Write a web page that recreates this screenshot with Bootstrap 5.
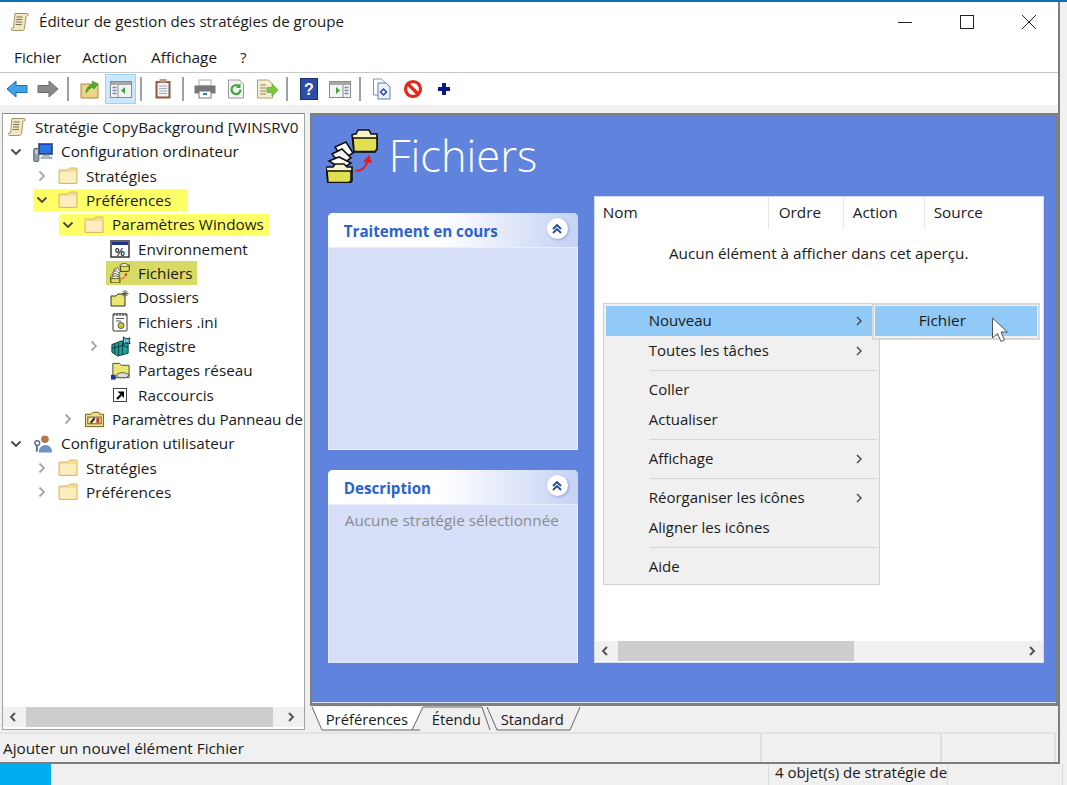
<!DOCTYPE html>
<html lang="fr">
<head>
<meta charset="utf-8">
<title>Éditeur de gestion des stratégies de groupe</title>
<link href="https://cdn.jsdelivr.net/npm/bootstrap@5.3.0/dist/css/bootstrap.min.css" rel="stylesheet">
<style>
html,body{height:785px;overflow:hidden}
body{margin:0;background:#f0f0f0;color:#1a1a1a;font-family:"Open Sans","Noto Sans",sans-serif;font-size:15.3px;line-height:1.2;border-top:2px solid #0b6fb5}
.gp-win{width:1060px;height:762px;border-right:2px solid #7d7d7d;border-bottom:2px solid #7d7d7d;background:#f0f0f0}
.gp-win>div{flex:none}
.gp-title{height:42px;background:#fff;padding-left:10px;padding-bottom:3px}
.gp-title-text{font-size:15.1px;margin-left:9px}
.gp-ctl{width:62px;height:38px}
.gp-ctl:last-child{margin-right:-2px}
.gp-menu{background:#fff;padding-left:14px;padding-bottom:2px;gap:21px;border-bottom:1px solid #c8c8c8;box-sizing:content-box;height:26px}
.gp-m1{margin-right:3px}.gp-m2{margin-right:2px}
.gp-tools{height:32px;background:#fff;padding-left:1px}
.gp-tb{width:31px;height:30px;border:1px solid transparent}
.gp-tb.gp-on{background:#cce8ff;border-color:#99d1ff}
.gp-sep{width:11px;height:24px;position:relative}
.gp-sep::after{content:"";position:absolute;left:4px;top:0;bottom:0;width:2px;background:#a0a0a0}
.gp-gap{height:8px}
.gp-main{height:619px}
.gp-left{width:303px;margin-left:2px;height:617px;border:1px solid #a3a3a3;border-top-color:#8a8a8a;background:#fff}
.gp-tree{padding-top:1px;white-space:nowrap}
.gp-row{height:24.35px;padding-left:0}
.gp-d1{padding-left:25px}.gp-d2{padding-left:51px}.gp-d3{padding-left:77px}
.gp-root{padding-left:0}
.gp-chev{width:26px;flex:none}
.gp-chev svg{margin-left:7px}
.gp-d1 .gp-chev svg,.gp-d2 .gp-chev svg,.gp-d3 .gp-chev svg{margin-left:8px}
.gp-ico{width:32px;flex:none;padding-left:4px}
.gp-hl{background:#ffff66;margin-left:5px;padding-right:17px;height:22px}
.gp-hl .gp-chev{width:22px}
.gp-d1 .gp-hl .gp-chev svg,.gp-d2 .gp-hl .gp-chev svg{margin-left:3px}
.gp-hl .gp-ico{width:31px;padding-left:3px}
.gp-hl2{padding-right:5px}
.gp-sel{background:#d9d965;padding-right:5px;height:24px}
.gp-tight{letter-spacing:-.15px}
.gp-scroll{height:20px;background:#f0f0f0;flex:none}
.gp-left .gp-scroll{margin-bottom:2px}
.gp-arrow{width:20px;height:20px}
.gp-arrow-r{margin-right:3px}
.gp-list .gp-arrow-r{margin-right:1px}
.gp-thumb{background:#cdcdcd;height:20px;margin-left:3px}
.gp-right{width:749px;margin-left:5px}
.gp-panel{height:593px;background:#6083dd;border:2px solid #7f7f7f;border-bottom:3px solid #808080;box-shadow:inset 0 -1px 0 #d8e2f8}
.gp-head{height:82px;padding-left:14px}
.gp-h1{font-size:43.4px;font-weight:300;color:#fff;margin-left:11px;line-height:1}
.gp-cols{padding-left:16px;gap:17px}
.gp-lcol{width:250px;padding-top:16px;gap:20px}
.gp-card{border:0;border-radius:5px 5px 0 0;background:#d6dff7;box-shadow:inset 0 0 0 1px #e8eefc}
.gp-c1{height:237px}.gp-c2{height:193px}
.gp-card-h{height:35px;padding:3px 10px 0 16px;border:0;border-radius:5px 5px 0 0;background:linear-gradient(90deg,#fff 0,#fff 45%,#c5d2f4 100%);border-bottom:1px solid #e8eefc;color:#2a62d0;font-weight:700;font-size:15.2px}
.gp-round{width:21px;height:21px;border-radius:50%;background:#fff;box-shadow:1px 1px 3px #8ea4d8;margin-top:-6px}
.gp-card-b{padding:6px 17px;color:#8a8a8a;font-size:15.3px}
.gp-list{width:448px;height:465px;background:#fff;box-shadow:0 0 0 1px #d0dcf5}
.gp-lh{height:32px}
.gp-lh>div{padding-left:8px;border-right:1px solid #e5e5e5;height:32px;line-height:31px}
.gp-empty{padding-top:15px;text-align:center;height:412px}
.gp-ctx.dropdown-menu{position:absolute;left:8px;top:106px;width:277px;height:282px;padding:2px;margin:0;display:block;min-width:0;border-radius:0;background:#f0f0f0;border:1px solid #cfcfcf;font-size:15px;color:#1a1a1a}
.gp-sub.dropdown-menu{left:277px;width:168px;height:37px;border-width:2px;border-color:#d8d8d8;padding:1px;font-size:15.3px}
.gp-ctx .dropdown-item{height:30px;padding:0 0 0 43px;color:#1a1a1a;line-height:28px;position:relative;background:none}
.gp-ctx .dropdown-item.active{background:#91c9f7;color:#1a1a1a}
.gp-sub .dropdown-item{height:30px;padding-left:44px}
.gp-ctx .dropdown-divider{margin:4px 0 4px 44px;border-color:#d5d5d5;opacity:1;height:0}
.gp-caret{position:absolute;right:14px;top:10px}
.gp-cursor{position:absolute;left:396px;top:120px;z-index:1001}
.gp-tabs{height:24px;font-size:14.8px;padding-top:3px}
.gp-tabsvg{position:absolute;left:0;top:0}
.gp-tab{position:relative;height:21px;line-height:21px}
.gp-status{height:30px;border-top:2px solid #e3e3e3}
.gp-status>div{border-right:2px solid #dedede;height:28px;line-height:28px;padding-left:3px}
.gp-strip{height:21px;font-size:15px}
.gp-blue{width:51px;background:#00adef}
.gp-sc{width:180px;padding-left:6px;margin-left:717px;border-left:1px solid #dcdcdc;border-right:1px solid #dcdcdc;white-space:nowrap;line-height:16px}
.gp-sc2{width:115px;border-right:1px solid #dcdcdc}
</style>
</head>
<body>
<svg width="0" height="0" class="d-block position-absolute">
<defs>
<symbol id="i-scroll" viewBox="0 0 20 20"><path d="M5 1.500h12c1.200 0 1.500 1.500.5 2.500l-1.500.5-1.500 12c-.2 1.200-1 2-2 2H2.500c-1.300 0-1.700-2-.5-2.500H3.500z" fill="#f2e6c0" stroke="#a39468"/><path d="M6.500 5h6M6.200 7.500h6M6 10h6M5.700 12.500h6" stroke="#77705a"/></symbol>
<symbol id="i-folder" viewBox="0 0 20 20"><path d="M1 4h9l1.500-2H19v15.500H1z" fill="#f8dd95" stroke="#d8b86c"/><path d="M2 6h16v10.500H2z" fill="#fdeebf"/></symbol>
<symbol id="i-computer" viewBox="0 0 20 20"><rect x="5.500" y="1.500" width="14" height="11" fill="#1d3fc0" stroke="#5c6d80"/><path d="M7 3h11v8H7z" fill="#2b74e6"/><path d="M10 13h6v2h3v1.500H8V15h2z" fill="#b7c0c8" stroke="#7c8791" stroke-width=".5"/><rect x=".8" y="6.500" width="5" height="13" rx="1" fill="#8fa3b5" stroke="#4f5f70"/><path d="M2 9h2.500M2 11h2.500" stroke="#fff"/></symbol>
<symbol id="i-env" viewBox="0 0 20 20"><rect x="1" y="2" width="18" height="16" fill="#fff" stroke="#333" stroke-width="1.500"/><rect x="2" y="3" width="16" height="3" fill="#21308f"/><text x="10" y="16.500" text-anchor="middle" font-family="Liberation Sans,sans-serif" font-size="11" font-weight="700" fill="#222">%</text></symbol>
<symbol id="i-files" viewBox="0 0 52 54"><g stroke="#111" stroke-width="1.600"><path d="M26 6l2-1h2l2-4h11l2 4h6v15l-2 3H28z" fill="#f4f4c8"/><path d="M27 9h24v11l-2 2.500H28z" fill="#e0e050"/><path d="M9 18l11-5 7 11-10 6z" fill="#fff"/><path d="M6 25l10-5 9 9-10 7z" fill="#f4f4f4"/><path d="M3 32l10-4 12 6-9 6z" fill="#fff"/><path d="M0 38h7l2-3h9l3 3h5v14l-2 2H2z" fill="#f4f4c8"/><path d="M1 42h24v10l-2 1.500H2z" fill="#e0e050"/></g><path d="M30 42c6 0 10-4 12-11" fill="none" stroke="#e61c1c" stroke-width="2"/><path d="M37 33l6-7 3 8z" fill="#e61c1c"/></symbol>
<symbol id="i-newfolder" viewBox="0 0 20 20"><path d="M1 8h5l2-2h7v12H1z" fill="#e7e76e" stroke="#333"/><path d="M15 2v7M11.500 5.500h7M12.500 3l5 5M17.500 3l-5 5" stroke="#555" stroke-width="1"/></symbol>
<symbol id="i-ini" viewBox="0 0 20 20"><rect x="3" y="2" width="14" height="17" rx="1" fill="#fff" stroke="#333"/><path d="M4 1v3M7 1v3M10 1v3M13 1v3M16 1v3" stroke="#333"/><path d="M6 6.500h8M6 9h5" stroke="#555"/><circle cx="11" cy="13.500" r="3" fill="#d3c61e" stroke="#555"/></symbol>
<symbol id="i-reg" viewBox="0 0 22 22"><path d="M2 9l10-4 7 3v10l-11 3-6-4z" fill="#18a5a0" stroke="#0c3a3a"/><path d="M2 13l11-3 6 2M5 8v11M9 7v13M13 6v14" stroke="#0c3a3a" fill="none"/><path d="M14 1l3 2 4-1-1 3 1 3-4-1-3 2V6z" fill="#6cc8e2" stroke="#123"/></symbol>
<symbol id="i-share" viewBox="0 0 22 20"><path d="M3 2h7l2 2h8v13H3z" fill="#e8e86e" stroke="#444"/><path d="M7 14c3-3 9-3 13 0l-3 3H9z" fill="#ddd" stroke="#555"/><rect x="1" y="14" width="5" height="5" fill="#1534a8"/></symbol>
<symbol id="i-short" viewBox="0 0 20 20"><rect x="3.500" y="3.500" width="13" height="13" fill="#fff" stroke="#444"/><path d="M7 14l4-4" stroke="#000" stroke-width="2.200"/><path d="M7.500 6.500H14V13z" fill="#000"/></symbol>
<symbol id="i-cpl" viewBox="0 0 22 20"><path d="M1.500 5h6l2-2h6l1 2h4v13h-19z" fill="#efe07a" stroke="#6b5b14"/><rect x="4" y="8" width="14" height="7" fill="#f4ecb0" stroke="#555"/><path d="M7 14l4-5" stroke="#222" stroke-width="2"/><path d="M13 9h3v5h-3z" fill="#c83030"/></symbol>
<symbol id="i-user" viewBox="0 0 22 20"><circle cx="12.500" cy="5" r="4" fill="#b0794e"/><path d="M6 19c0-5 3-8 7-8s7 3 7 8z" fill="#6d95c4"/><circle cx="4.500" cy="9" r="2.500" fill="none" stroke="#55708f" stroke-width="1.500"/><path d="M4 11v7" stroke="#55708f" stroke-width="2"/></symbol>
<symbol id="c-down" viewBox="0 0 12 12"><path d="M1.500 3.500L6 8l4.500-4.500" fill="none" stroke="#444" stroke-width="1.800"/></symbol>
<symbol id="c-right" viewBox="0 0 12 12"><path d="M3.500 1.500L8 6l-4.500 4.500" fill="none" stroke="#a6a6a6" stroke-width="1.800"/></symbol>
<symbol id="c-dbl" viewBox="0 0 12 12"><path d="M2 6l4-4 4 4M2 10l4-4 4 4" fill="none" stroke="#21489c" stroke-width="1.800"/></symbol>
</defs>
</svg>

<div class="gp-win d-flex flex-column">
  <div class="gp-title d-flex align-items-center">
    <svg width="20" height="20"><use href="#i-scroll"/></svg>
    <span class="gp-title-text flex-grow-1">Éditeur de gestion des stratégies de groupe</span>
    <div class="gp-ctl d-flex align-items-center justify-content-center"><svg width="16" height="16"><path d="M1 8.500h14" stroke="#222"/></svg></div>
    <div class="gp-ctl d-flex align-items-center justify-content-center"><svg width="16" height="16"><rect x="1.500" y="1.500" width="13" height="13" fill="none" stroke="#222"/></svg></div>
    <div class="gp-ctl d-flex align-items-center justify-content-center"><svg width="16" height="16"><path d="M1 1l14 14M15 1L1 15" stroke="#222"/></svg></div>
  </div>
  <div class="gp-menu d-flex align-items-center"><span>Fichier</span><span class="gp-m1">Action</span><span class="gp-m2">Affichage</span><span>?</span></div>
  <div class="gp-tools d-flex align-items-center">
    <div class="gp-tb d-flex align-items-center justify-content-center"><svg width="22" height="18" viewBox="0 0 22 18"><path d="M1 9l9-8v4.500h11v7H10V17z" fill="#3ea2e6" stroke="#1d6db3"/></svg></div>
    <div class="gp-tb d-flex align-items-center justify-content-center"><svg width="22" height="18" viewBox="0 0 22 18"><path d="M21 9l-9-8v4.500H1v7h11V17z" fill="#8a8a8a" stroke="#6b6b6b"/></svg></div>
    <div class="gp-sep"></div>
    <div class="gp-tb d-flex align-items-center justify-content-center"><svg width="20" height="20" viewBox="0 0 20 20"><path d="M1 5h17v14H1z" fill="#f0d486" stroke="#a58a3c"/><path d="M6 14c0-5 3-8 7-9l-1-3 6 3-4 5-1-2c-3 1-5 3-7 6z" fill="#4fb02e" stroke="#2b7a1a" stroke-width=".6"/></svg></div>
    <div class="gp-tb gp-on d-flex align-items-center justify-content-center"><svg width="22" height="20" viewBox="0 0 22 20"><rect x=".5" y="2.500" width="21" height="16" fill="#f4f4f4" stroke="#8a8a8a"/><rect x="1" y="3" width="20" height="3" fill="#a9a9a9"/><path d="M8 6v12" stroke="#8a8a8a"/><path d="M2.500 8.500h4M2.500 11.500h4M2.500 14.500h4" stroke="#6a8cab" stroke-width="1.500"/><path d="M15 8v7l-4-3.500z" fill="#3aa53a"/></svg></div>
    <div class="gp-sep"></div>
    <div class="gp-tb d-flex align-items-center justify-content-center"><svg width="18" height="22" viewBox="0 0 18 22"><rect x="1.500" y="3" width="15" height="17.500" fill="#8d5a3c"/><rect x="3.500" y="5" width="11" height="13.500" fill="#eef3f6"/><path d="M5 8h8M5 10.500h8M5 13h8M5 15.500h8" stroke="#9eb0bd"/><rect x="5.500" y="1" width="7" height="3.500" fill="#b79a86"/></svg></div>
    <div class="gp-sep"></div>
    <div class="gp-tb d-flex align-items-center justify-content-center"><svg width="22" height="20" viewBox="0 0 22 20"><rect x="5" y="1" width="12" height="6" fill="#fff" stroke="#aaa"/><rect x=".5" y="6.500" width="21" height="8" fill="#777"/><rect x="5" y="12" width="12" height="7" fill="#fff" stroke="#777"/><path d="M9 15h4" stroke="#2d7da8" stroke-width="2"/></svg></div>
    <div class="gp-tb d-flex align-items-center justify-content-center"><svg width="20" height="20" viewBox="0 0 20 20"><path d="M2.500 1h11l4 4v14h-15z" fill="#f5f5f5" stroke="#999"/><path d="M14.500 10.500a4.500 4.500 0 1 1-1.500-3.200" fill="none" stroke="#3da83a" stroke-width="2.200"/><path d="M14.500 4v5h-4.500z" fill="#3da83a"/></svg></div>
    <div class="gp-tb d-flex align-items-center justify-content-center"><svg width="22" height="20" viewBox="0 0 22 20"><path d="M1.500 1h11l4 4v14h-15z" fill="#f5efd0" stroke="#a99f78"/><path d="M4 6h6M4 9h6M4 12h6M4 15h6" stroke="#8b8460"/><path d="M11 8.500h5V5l6 6-6 6v-3.500h-5z" fill="#78c83c" stroke="#4b9a1f" stroke-width=".6"/></svg></div>
    <div class="gp-sep"></div>
    <div class="gp-tb d-flex align-items-center justify-content-center"><svg width="18" height="22" viewBox="0 0 18 22"><rect x=".5" y=".5" width="17" height="21" fill="#2b4ea8" stroke="#1a2f70"/><text x="9" y="16.500" text-anchor="middle" font-family="Liberation Sans,sans-serif" font-size="16" font-weight="700" fill="#fff">?</text></svg></div>
    <div class="gp-tb d-flex align-items-center justify-content-center"><svg width="22" height="20" viewBox="0 0 22 20"><rect x=".5" y="2.500" width="21" height="16" fill="#f4f4f4" stroke="#8a8a8a"/><rect x="1" y="3" width="20" height="3" fill="#a9a9a9"/><path d="M14 6v12" stroke="#8a8a8a"/><path d="M15.500 8.500h4M15.500 11.500h4M15.500 14.500h4" stroke="#6a8cab" stroke-width="1.500"/><path d="M7 8v7l4-3.500z" fill="#3aa53a"/></svg></div>
    <div class="gp-sep"></div>
    <div class="gp-tb d-flex align-items-center justify-content-center"><svg width="20" height="22" viewBox="0 0 20 22"><path d="M1.500 1h8l3 3v13h-11z" fill="#fff" stroke="#7f93ad"/><path d="M6 5h8l4 4v12H6z" fill="#eef3fa" stroke="#5e7da8"/><path d="M8.500 14l3-3 3 3-3 3z" fill="none" stroke="#2a45b5" stroke-width="1.500"/></svg></div>
    <div class="gp-tb d-flex align-items-center justify-content-center"><svg width="20" height="20" viewBox="0 0 20 20"><circle cx="10" cy="10" r="7.500" fill="#fff" stroke="#e0281c" stroke-width="3.200"/><path d="M5 5l10 10" stroke="#e0281c" stroke-width="3.200"/></svg></div>
    <div class="gp-tb d-flex align-items-center justify-content-center"><svg width="14" height="14" viewBox="0 0 14 14"><path d="M5 1h4v4h4v4H9v4H5V9H1V5h4z" fill="#0b1a86"/></svg></div>
  </div>
  <div class="gp-gap"></div>

  <div class="gp-main d-flex">
    <div class="gp-left d-flex flex-column">
      <div class="gp-tree flex-grow-1 overflow-hidden">
        <div class="gp-row gp-root d-flex align-items-center"><span class="gp-ico"><svg width="20" height="20" class="d-block"><use href="#i-scroll"/></svg></span>Stratégie CopyBackground [WINSRV0</div>
        <div class="gp-row d-flex align-items-center"><span class="gp-chev"><svg width="12" height="12" class="d-block"><use href="#c-down"/></svg></span><span class="gp-ico"><svg width="20" height="20" class="d-block"><use href="#i-computer"/></svg></span>Configuration ordinateur</div>
        <div class="gp-row gp-d1 d-flex align-items-center"><span class="gp-chev"><svg width="12" height="12" class="d-block"><use href="#c-right"/></svg></span><span class="gp-ico"><svg width="20" height="20" class="d-block"><use href="#i-folder"/></svg></span>Stratégies</div>
        <div class="gp-row gp-d1 d-flex align-items-center"><div class="gp-hl d-flex align-items-center"><span class="gp-chev"><svg width="12" height="12" class="d-block"><use href="#c-down"/></svg></span><span class="gp-ico"><svg width="20" height="20" class="d-block"><use href="#i-folder"/></svg></span>Préférences</div></div>
        <div class="gp-row gp-d2 d-flex align-items-center"><div class="gp-hl gp-hl2 d-flex align-items-center"><span class="gp-chev"><svg width="12" height="12" class="d-block"><use href="#c-down"/></svg></span><span class="gp-ico"><svg width="20" height="20" class="d-block"><use href="#i-folder"/></svg></span>Paramètres Windows</div></div>
        <div class="gp-row gp-d3 d-flex align-items-center"><span class="gp-chev"></span><span class="gp-ico"><svg width="20" height="20" class="d-block"><use href="#i-env"/></svg></span>Environnement</div>
        <div class="gp-row gp-d3 d-flex align-items-center"><span class="gp-chev"></span><div class="gp-sel d-flex align-items-center"><span class="gp-ico"><svg width="20" height="20" class="d-block"><use href="#i-files"/></svg></span>Fichiers</div></div>
        <div class="gp-row gp-d3 d-flex align-items-center"><span class="gp-chev"></span><span class="gp-ico"><svg width="20" height="20" class="d-block"><use href="#i-newfolder"/></svg></span>Dossiers</div>
        <div class="gp-row gp-d3 d-flex align-items-center"><span class="gp-chev"></span><span class="gp-ico"><svg width="20" height="20" class="d-block"><use href="#i-ini"/></svg></span>Fichiers .ini</div>
        <div class="gp-row gp-d3 d-flex align-items-center"><span class="gp-chev"><svg width="12" height="12" class="d-block"><use href="#c-right"/></svg></span><span class="gp-ico"><svg width="21" height="21" class="d-block"><use href="#i-reg"/></svg></span>Registre</div>
        <div class="gp-row gp-d3 d-flex align-items-center"><span class="gp-chev"></span><span class="gp-ico"><svg width="21" height="20" class="d-block"><use href="#i-share"/></svg></span>Partages réseau</div>
        <div class="gp-row gp-d3 d-flex align-items-center"><span class="gp-chev"></span><span class="gp-ico"><svg width="20" height="20" class="d-block"><use href="#i-short"/></svg></span>Raccourcis</div>
        <div class="gp-row gp-d2 gp-tight d-flex align-items-center"><span class="gp-chev"><svg width="12" height="12" class="d-block"><use href="#c-right"/></svg></span><span class="gp-ico"><svg width="21" height="20" class="d-block"><use href="#i-cpl"/></svg></span>Paramètres du Panneau de</div>
        <div class="gp-row d-flex align-items-center"><span class="gp-chev"><svg width="12" height="12" class="d-block"><use href="#c-down"/></svg></span><span class="gp-ico"><svg width="21" height="20" class="d-block"><use href="#i-user"/></svg></span>Configuration utilisateur</div>
        <div class="gp-row gp-d1 d-flex align-items-center"><span class="gp-chev"><svg width="12" height="12" class="d-block"><use href="#c-right"/></svg></span><span class="gp-ico"><svg width="20" height="20" class="d-block"><use href="#i-folder"/></svg></span>Stratégies</div>
        <div class="gp-row gp-d1 d-flex align-items-center"><span class="gp-chev"><svg width="12" height="12" class="d-block"><use href="#c-right"/></svg></span><span class="gp-ico"><svg width="20" height="20" class="d-block"><use href="#i-folder"/></svg></span>Préférences</div>
      </div>
      <div class="gp-scroll d-flex">
        <div class="gp-arrow d-flex align-items-center justify-content-center"><svg width="10" height="10" viewBox="0 0 10 10"><path d="M7 1L3 5l4 4" fill="none" stroke="#555" stroke-width="2"/></svg></div>
        <div class="gp-thumb" style="width:247px"></div>
        <div class="flex-grow-1"></div>
        <div class="gp-arrow gp-arrow-r d-flex align-items-center justify-content-center"><svg width="10" height="10" viewBox="0 0 10 10"><path d="M3 1l4 4-4 4" fill="none" stroke="#555" stroke-width="2"/></svg></div>
      </div>
    </div>

    <div class="gp-right d-flex flex-column">
      <div class="gp-panel d-flex flex-column">
        <div class="gp-head d-flex align-items-center"><svg width="52" height="54"><use href="#i-files"/></svg><span class="gp-h1">Fichiers</span></div>
        <div class="gp-cols d-flex">
          <div class="gp-lcol d-flex flex-column">
            <div class="card gp-card gp-c1">
              <div class="card-header gp-card-h d-flex align-items-center justify-content-between">Traitement en cours<span class="gp-round d-flex align-items-center justify-content-center"><svg width="12" height="12"><use href="#c-dbl"/></svg></span></div>
            </div>
            <div class="card gp-card gp-c2">
              <div class="card-header gp-card-h d-flex align-items-center justify-content-between">Description<span class="gp-round d-flex align-items-center justify-content-center"><svg width="12" height="12"><use href="#c-dbl"/></svg></span></div>
              <div class="card-body gp-card-b">Aucune stratégie sélectionnée</div>
            </div>
          </div>
          <div class="gp-list position-relative d-flex flex-column">
            <div class="gp-lh d-flex">
              <div style="width:174px">Nom</div><div style="width:75px;padding-left:10px">Ordre</div><div style="width:81px;padding-left:9px">Action</div><div class="border-0" style="padding-left:9px">Source</div>
            </div>
            <div class="gp-empty">Aucun élément à afficher dans cet aperçu.</div>
            <div class="gp-scroll d-flex">
              <div class="gp-arrow d-flex align-items-center justify-content-center"><svg width="10" height="10" viewBox="0 0 10 10"><path d="M7 1L3 5l4 4" fill="none" stroke="#555" stroke-width="2"/></svg></div>
              <div class="gp-thumb" style="width:236px"></div>
              <div class="flex-grow-1"></div>
              <div class="gp-arrow gp-arrow-r d-flex align-items-center justify-content-center"><svg width="10" height="10" viewBox="0 0 10 10"><path d="M3 1l4 4-4 4" fill="none" stroke="#555" stroke-width="2"/></svg></div>
            </div>
            <div class="dropdown-menu gp-ctx">
              <a class="dropdown-item active">Nouveau<svg class="gp-caret" width="8" height="10" viewBox="0 0 8 10"><path d="M2 1l4 4-4 4" fill="none" stroke="#444" stroke-width="1.400"/></svg></a>
              <a class="dropdown-item">Toutes les tâches<svg class="gp-caret" width="8" height="10" viewBox="0 0 8 10"><path d="M2 1l4 4-4 4" fill="none" stroke="#444" stroke-width="1.400"/></svg></a>
              <hr class="dropdown-divider">
              <a class="dropdown-item">Coller</a>
              <a class="dropdown-item">Actualiser</a>
              <hr class="dropdown-divider">
              <a class="dropdown-item">Affichage<svg class="gp-caret" width="8" height="10" viewBox="0 0 8 10"><path d="M2 1l4 4-4 4" fill="none" stroke="#444" stroke-width="1.400"/></svg></a>
              <hr class="dropdown-divider">
              <a class="dropdown-item">Réorganiser les icônes<svg class="gp-caret" width="8" height="10" viewBox="0 0 8 10"><path d="M2 1l4 4-4 4" fill="none" stroke="#444" stroke-width="1.400"/></svg></a>
              <a class="dropdown-item">Aligner les icônes</a>
              <hr class="dropdown-divider">
              <a class="dropdown-item">Aide</a>
            </div>
            <div class="dropdown-menu gp-ctx gp-sub"><a class="dropdown-item active">Fichier</a></div>
            <svg class="gp-cursor" width="18" height="27" viewBox="0 0 18 27"><path d="M1.500 1v20l5-4.500 3.500 8 3.500-1.500-3.500-8h6.500z" fill="#fff" stroke="#555"/></svg>
          </div>
        </div>
      </div>
      <div class="gp-tabs d-flex position-relative">
        <svg class="gp-tabsvg" width="300" height="25" viewBox="0 0 300 25"><path d="M2 1l10 23h90l11-23z" fill="#fff"/><path d="M2 1l10 23h90l11-23M113 1h59l8 23M102 24h8M177 1l10 23h73l10-23" fill="none" stroke="#666"/></svg>
        <span class="gp-tab" style="margin-left:16px;width:106px">Préférences</span>
        <span class="gp-tab" style="width:69px">Étendu</span>
        <span class="gp-tab">Standard</span>
      </div>
    </div>
  </div>

  <div class="gp-status d-flex">
    <div style="width:762px">Ajouter un nouvel élément Fichier</div>
    <div style="width:180px"></div>
    <div style="width:114px"></div>
  </div>
</div>
<div class="gp-strip d-flex">
  <div class="gp-blue"></div>
  <div class="gp-sc">4 objet(s) de stratégie de</div>
  <div class="gp-sc2"></div>
</div>
</body>
</html>
